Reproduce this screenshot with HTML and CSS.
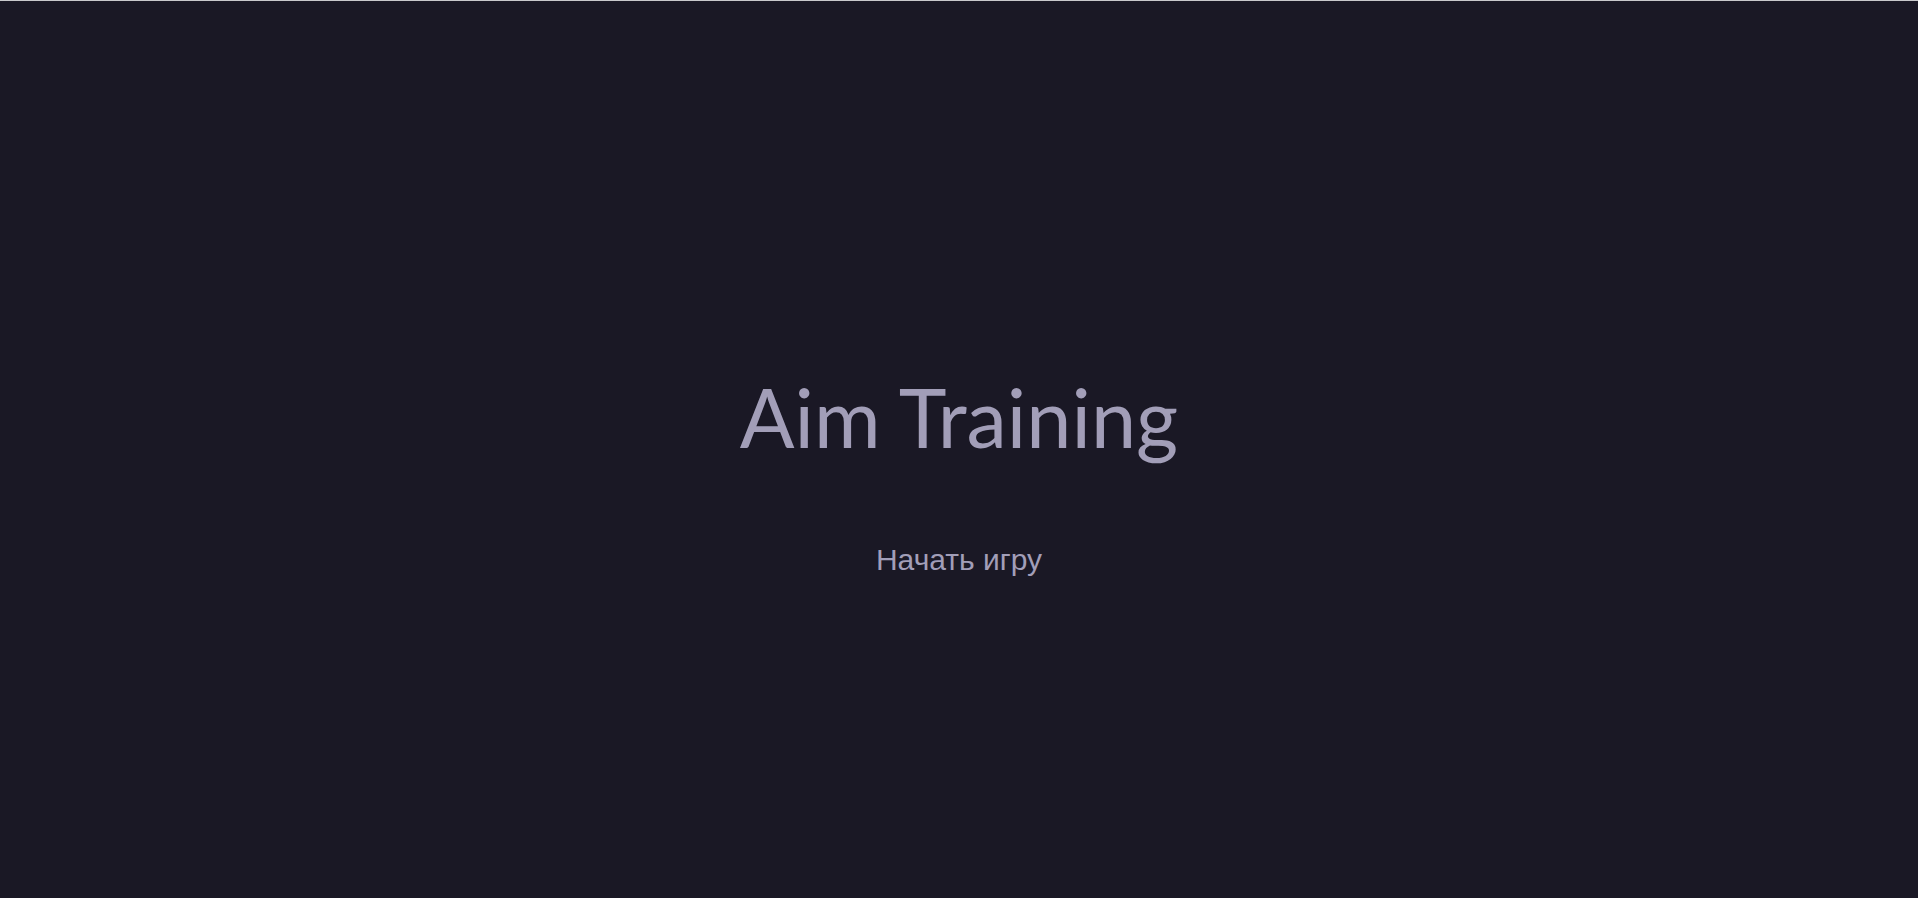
FILE: index.html
```html
<!DOCTYPE html>
<html lang="ru">
<head>
<meta charset="utf-8">
<title>Aim Training</title>
<link rel="stylesheet" href="styles.css">
</head>
<body>
<main class="screen">
  <h1 class="title">Aim Training</h1>
  <a href="#" class="start">Начать игру</a>
</main>
</body>
</html>
```
FILE: styles.css
```css
html, body {
  margin: 0;
  padding: 0;
  height: 100%;
}
body {
  background: #1a1825;
  border-top: 1px solid #c9c9cc;
  box-sizing: border-box;
}
.screen {
  height: 100%;
  box-sizing: border-box;
  padding-top: 46px;
  display: flex;
  flex-direction: column;
  align-items: center;
  justify-content: center;
}
.title {
  margin: 0;
  font-family: Lato, sans-serif;
  font-weight: 400;
  font-size: 81px;
  color: #a29eb8;
  line-height: 1.2;
}
.start {
  margin-top: 78px;
  font-family: "Liberation Sans", Arial, sans-serif;
  font-size: 30px;
  color: #a29eb8;
  text-decoration: none;
}
```
